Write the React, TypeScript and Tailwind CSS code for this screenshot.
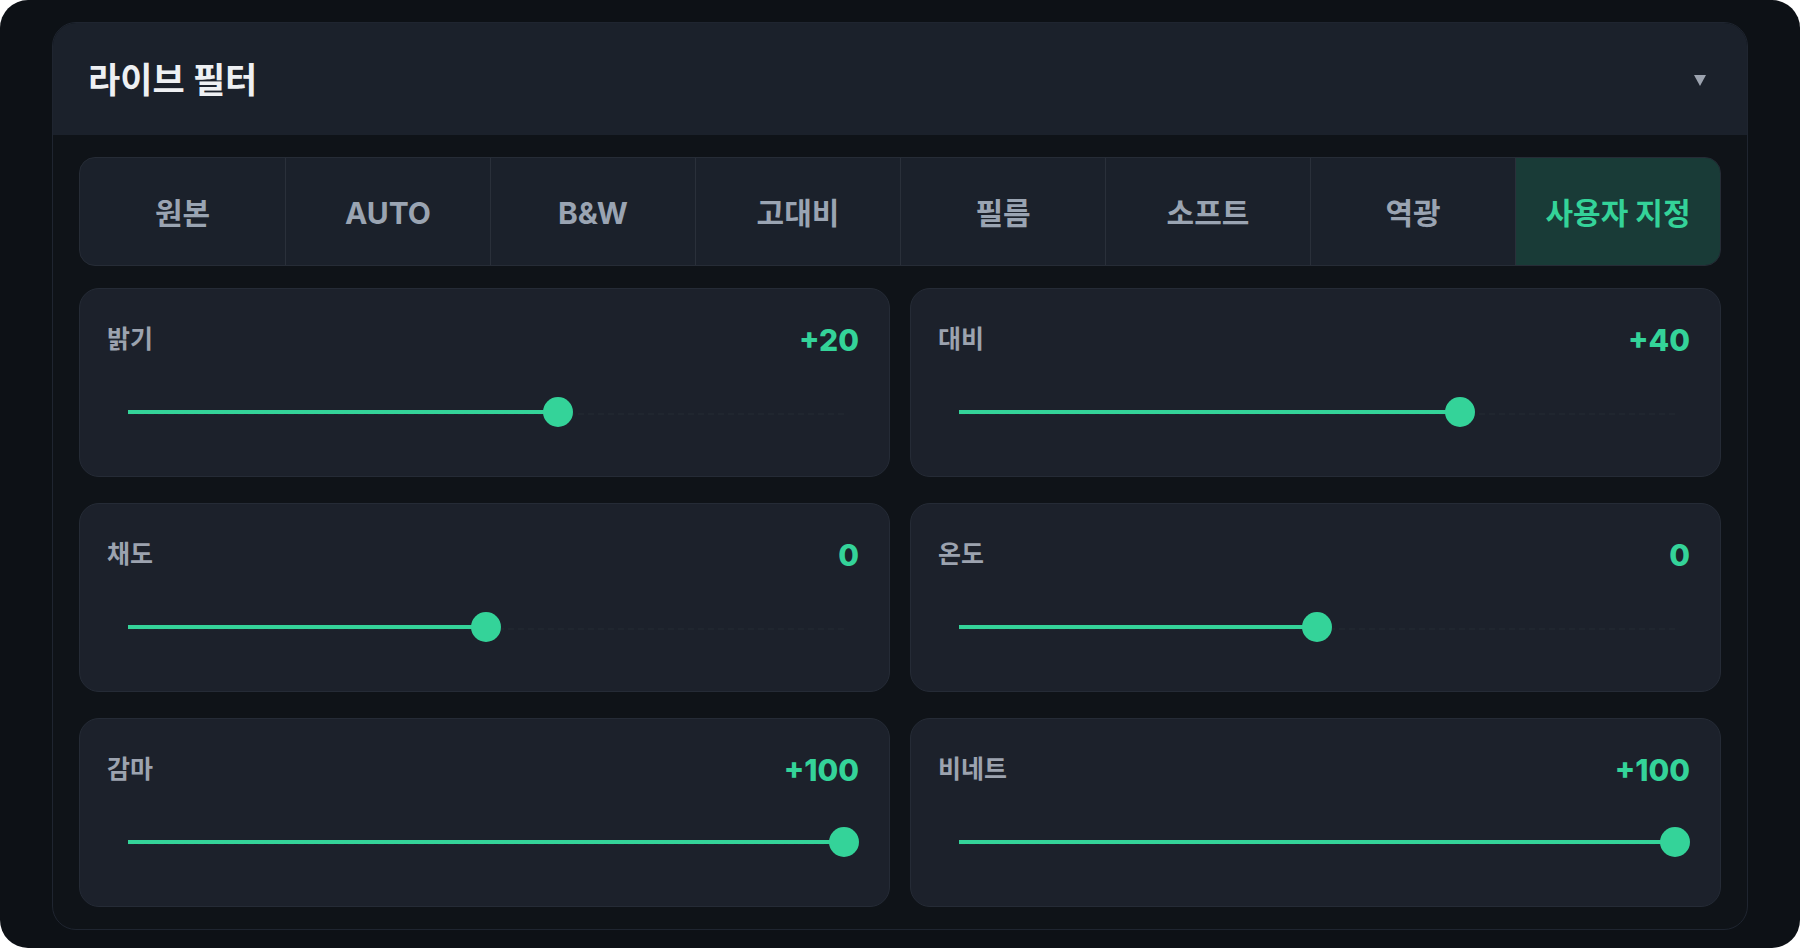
import { useState } from "react";

const TABS = ["원본", "AUTO", "B&W", "고대비", "필름", "소프트", "역광", "사용자 지정"];

const SLIDERS = [
  { label: "밝기", value: 20 },
  { label: "대비", value: 40 },
  { label: "채도", value: 0 },
  { label: "온도", value: 0 },
  { label: "감마", value: 100 },
  { label: "비네트", value: 100 },
];

const FONT = "font-['Inter','Noto_Sans_CJK_KR',sans-serif]";

const formatValue = (v: number) => (v > 0 ? `+${v}` : `${v}`);

const SliderCard = ({ label, value }: { label: string; value: number }) => {
  // range is -100..100
  const pct = ((value + 100) / 200) * 100;

  return (
    <div className="flex h-[189px] flex-col rounded-[20px] border border-[#252b36] bg-[#1c212b] pl-[27px] pr-[30px] pt-[31px]">
      <div className="flex h-[40px] items-center justify-between">
        <span className="text-[25px] font-bold text-[#9ca3af]">{label}</span>
        <span className="font-['Inter',sans-serif] text-[30px] font-extrabold text-[#34d399]">
          {formatValue(value)}
        </span>
      </div>
      <div className="relative ml-[21px] mr-[15px] mt-[37px] h-[30px]">
        <div className="absolute inset-x-0 top-[16px] border-t-2 border-dashed border-[#20262f]" />
        <div
          className="absolute left-0 top-1/2 h-[4px] -translate-y-1/2 bg-[#34d399]"
          style={{ width: `${pct}%` }}
        />
        <div
          className="absolute top-1/2 h-[30px] w-[30px] -translate-x-1/2 -translate-y-1/2 rounded-full bg-[#34d399]"
          style={{ left: `${pct}%` }}
        />
      </div>
    </div>
  );
};

const App = () => {
  const [active, setActive] = useState(7);

  return (
    <div className={`min-h-screen bg-white ${FONT}`}>
      <div className="flex h-[948px] rounded-[28px] bg-[#0d1116] px-[52px] pb-[18px] pt-[22px]">
        <section className="flex flex-1 flex-col overflow-hidden rounded-[24px] border border-[#1f2530] bg-[#0f1318]">
          <header className="flex h-[112px] items-center justify-between bg-[#1b212b] pl-[35px] pr-[41px]">
            <h2 className="mt-[3px] text-[35px] font-bold text-[#eef0f3]">라이브 필터</h2>
            <svg width="12" height="11" viewBox="0 0 12 11" className="mt-[3px]">
              <path d="M0 0H12L6 11Z" fill="#9ca3af" />
            </svg>
          </header>

          <div className="flex flex-1 flex-col gap-[22px] px-[26px] pb-[21px] pt-[22px]">
            <div className="grid h-[109px] grid-cols-8 overflow-hidden rounded-[16px] border border-[#262c36] bg-[#1b212b]">
              {TABS.map((tab, i) => (
                <button
                  key={tab}
                  onClick={() => setActive(i)}
                  className={`flex items-center justify-center pt-[3px] text-[30px] font-bold ${
                    i > 0 ? "border-l border-[#2a303a]" : ""
                  } ${i === active ? "bg-[#193b37] text-[#34d399]" : "text-[#9aa4b2]"}`}
                >
                  {tab}
                </button>
              ))}
            </div>

            <div className="grid grid-cols-2 gap-x-[20px] gap-y-[26px]">
              {SLIDERS.map((s) => (
                <SliderCard key={s.label} label={s.label} value={s.value} />
              ))}
            </div>
          </div>
        </section>
      </div>
    </div>
  );
};

export default App;
